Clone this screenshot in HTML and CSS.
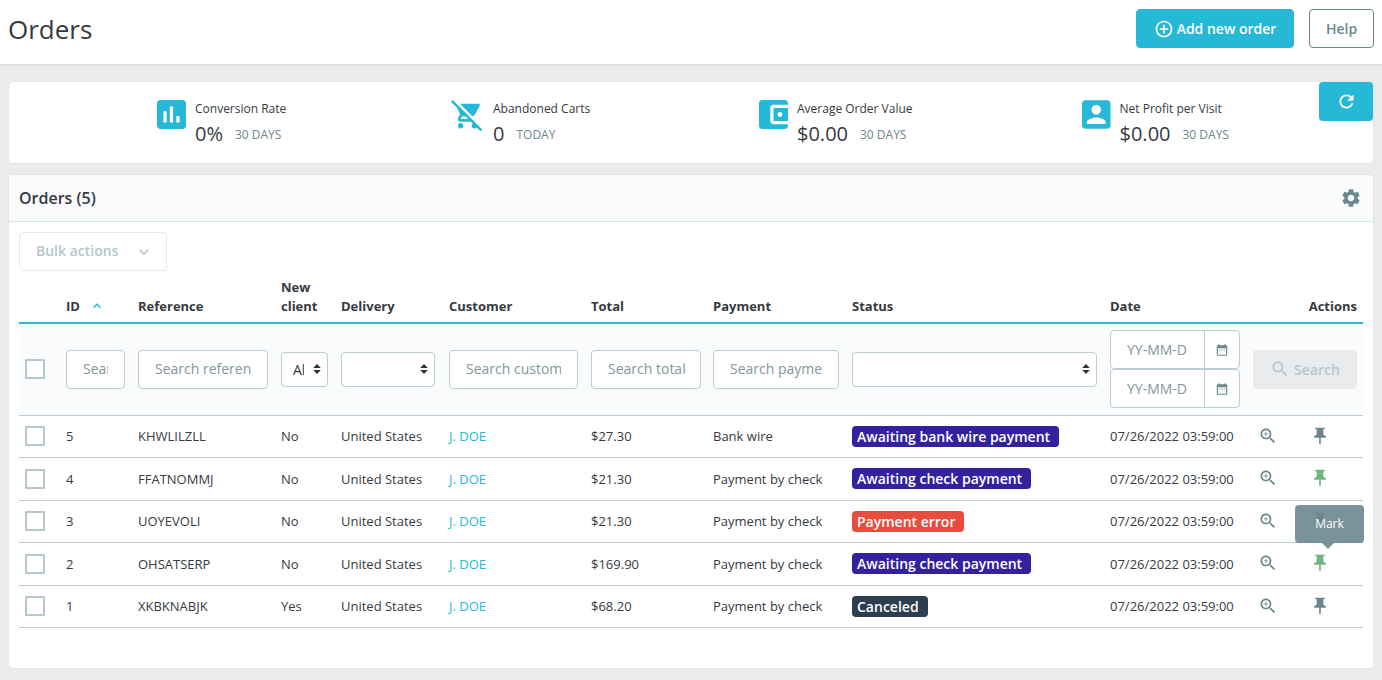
FILE: index.html
```html
<!DOCTYPE html>
<html lang="en">
<head>
<meta charset="utf-8">
<title>Orders</title>
<link rel="stylesheet" href="styles.css">
</head>
<body>
<svg class="defs" width="0" height="0" aria-hidden="true">
  <symbol id="i-zoom" viewBox="0 0 24 24"><path d="M15.5 14h-.79l-.28-.27C15.41 12.59 16 11.11 16 9.5 16 5.91 13.09 3 9.5 3S3 5.91 3 9.5 5.91 16 9.5 16c1.61 0 3.09-.59 4.23-1.57l.27.28v.79l5 4.99L20.49 19l-4.99-5zm-6 0C7.01 14 5 11.99 5 9.5S7.01 5 9.5 5 14 7.01 14 9.5 11.99 14 9.5 14z"/><path d="M12 10h-2v2H9v-2H7V9h2V7h1v2h2v1z"/></symbol>
  <symbol id="i-pin" viewBox="0 0 24 24"><path d="M16 9V4h1c.55 0 1-.45 1-1s-.45-1-1-1H7c-.55 0-1 .45-1 1s.45 1 1 1h1v5c0 1.66-1.34 3-3 3v2h5.97v7l1 1 1-1v-7H19v-2c-1.66 0-3-1.34-3-3z"/></symbol>
  <symbol id="i-carets" viewBox="0 0 8 10"><path d="M4 0l3.8 4H.2zM4 10L.2 6h7.6z"/></symbol>
  <symbol id="i-cal" viewBox="0 0 24 24"><path d="M9 11H7v2h2v-2zm4 0h-2v2h2v-2zm4 0h-2v2h2v-2zm2-7h-1V2h-2v2H8V2H6v2H5c-1.11 0-1.99.9-1.99 2L3 20c0 1.1.89 2 2 2h14c1.1 0 2-.9 2-2V6c0-1.1-.9-2-2-2zm0 16H5V9h14v11z"/></symbol>
</svg>

<header class="page-head">
  <h1 class="page-title">Orders</h1>
  <div class="head-actions">
    <a class="btn btn-primary" href="#"><svg class="btn-icon" viewBox="0 0 24 24"><path d="M13 7h-2v4H7v2h4v4h2v-4h4v-2h-4V7zm-1-5C6.48 2 2 6.48 2 12s4.48 10 10 10 10-4.48 10-10S17.52 2 12 2zm0 18c-4.41 0-8-3.59-8-8s3.59-8 8-8 8 3.59 8 8-3.59 8-8 8z"/></svg>Add new order</a>
    <a class="btn btn-outline" href="#">Help</a>
  </div>
</header>

<main class="content">
  <section class="card kpis">
    <div class="kpi">
      <svg class="kpi-icon" viewBox="3 3 18 18"><path d="M19 3H5c-1.1 0-2 .9-2 2v14c0 1.1.9 2 2 2h14c1.1 0 2-.9 2-2V5c0-1.1-.9-2-2-2zM9 17H7v-7h2v7zm4 0h-2V7h2v10zm4 0h-2v-4h2v4z"/></svg>
      <div class="kpi-text"><div class="kpi-title">Conversion Rate</div><div class="kpi-line"><span class="kpi-value">0%</span><span class="kpi-sub">30 DAYS</span></div></div>
    </div>
    <div class="kpi">
      <svg class="kpi-icon kpi-cart" viewBox="0 1 24 23"><path d="M22.73 22.73L2.77 2.77 2 2l-.73-.73L0 2.54l4.39 4.39 2.21 4.66-1.35 2.45c-.16.28-.25.61-.25.96 0 1.1.9 2 2 2h7.46l1.38 1.38c-.5.36-.83.95-.83 1.62 0 1.1.89 2 1.99 2 .67 0 1.26-.33 1.62-.84L21.46 24l1.27-1.27zM7.42 15c-.14 0-.25-.11-.25-.25l.03-.12.9-1.63h2.36l2 2H7.42zm8.13-2c.75 0 1.41-.41 1.75-1.03l3.58-6.49c.08-.14.12-.31.12-.48 0-.55-.45-1-1-1H6.54l9.01 9zM7 18c-1.1 0-1.99.9-1.99 2S5.9 22 7 22s2-.9 2-2-.9-2-2-2z"/></svg>
      <div class="kpi-text"><div class="kpi-title">Abandoned Carts</div><div class="kpi-line"><span class="kpi-value">0</span><span class="kpi-sub">TODAY</span></div></div>
    </div>
    <div class="kpi">
      <svg class="kpi-icon" viewBox="3 3 18 18"><path d="M21 18v1c0 1.1-.9 2-2 2H5c-1.11 0-2-.9-2-2V5c0-1.1.89-2 2-2h14c1.1 0 2 .9 2 2v1h-9c-1.11 0-2 .9-2 2v8c0 1.1.89 2 2 2h9zm-9-2h10V8H12v8zm4-2.5c-.83 0-1.5-.67-1.5-1.5s.67-1.5 1.5-1.5 1.5.67 1.5 1.5-.67 1.5-1.5 1.5z"/></svg>
      <div class="kpi-text"><div class="kpi-title">Average Order Value</div><div class="kpi-line"><span class="kpi-value">$0.00</span><span class="kpi-sub">30 DAYS</span></div></div>
    </div>
    <div class="kpi">
      <svg class="kpi-icon kpi-box" viewBox="3 3 18 18"><path d="M3 5v14c0 1.1.89 2 2 2h14c1.1 0 2-.9 2-2V5c0-1.1-.9-2-2-2H5c-1.11 0-2 .9-2 2zm12 4c0 1.66-1.34 3-3 3s-3-1.34-3-3 1.34-3 3-3 3 1.34 3 3zm-9 8c0-2 4-3.1 6-3.1s6 1.1 6 3.1v1H6v-1z"/></svg>
      <div class="kpi-text"><div class="kpi-title">Net Profit per Visit</div><div class="kpi-line"><span class="kpi-value">$0.00</span><span class="kpi-sub">30 DAYS</span></div></div>
    </div>
    <a class="refresh" href="#"><svg viewBox="0 0 24 24"><path d="M17.65 6.35C16.2 4.9 14.21 4 12 4c-4.42 0-7.99 3.58-7.99 8s3.57 8 7.99 8c3.73 0 6.84-2.55 7.73-6h-2.08c-.82 2.33-3.04 4-5.65 4-3.31 0-6-2.69-6-6s2.69-6 6-6c1.66 0 3.14.69 4.22 1.78L13 11h7V4l-2.35 2.35z"/></svg></a>
  </section>

  <section class="card orders">
    <div class="orders-head">
      <h2 class="orders-title">Orders (5)</h2>
      <svg class="gear" viewBox="0 0 24 24"><path d="M19.14 12.94c.04-.3.06-.61.06-.94 0-.32-.02-.64-.07-.94l2.03-1.58c.18-.14.23-.41.12-.61l-1.92-3.32c-.12-.22-.37-.29-.59-.22l-2.39.96c-.5-.38-1.03-.7-1.62-.94l-.36-2.54c-.04-.24-.24-.41-.48-.41h-3.84c-.24 0-.43.17-.47.41l-.36 2.54c-.59.24-1.13.57-1.62.94l-2.39-.96c-.22-.08-.47 0-.59.22L2.74 8.87c-.12.21-.08.47.12.61l2.03 1.58c-.05.3-.09.63-.09.94s.02.64.07.94l-2.03 1.58c-.18.14-.23.41-.12.61l1.92 3.32c.12.22.37.29.59.22l2.39-.96c.5.38 1.03.7 1.62.94l.36 2.54c.05.24.24.41.48.41h3.84c.24 0 .44-.17.47-.41l.36-2.54c.59-.24 1.13-.56 1.62-.94l2.39.96c.22.08.47 0 .59-.22l1.92-3.32c.12-.22.07-.47-.12-.61l-2.01-1.58zM12 15.6c-1.98 0-3.6-1.62-3.6-3.6s1.62-3.6 3.6-3.6 3.6 1.62 3.6 3.6-1.62 3.6-3.6 3.6z"/></svg>
    </div>
    <div class="orders-body">
      <button class="bulk" type="button" disabled><span class="bulk-label">Bulk actions</span><svg viewBox="0 0 24 24"><path d="M7.41 8.59L12 13.17l4.59-4.58L18 10l-6 6-6-6 1.41-1.41z"/></svg></button>
      <table class="grid">
        <colgroup>
          <col class="c-check"><col class="c-id"><col class="c-ref"><col class="c-new"><col class="c-del"><col class="c-cust"><col class="c-total"><col class="c-pay"><col class="c-status"><col class="c-date"><col class="c-view"><col class="c-act">
        </colgroup>
        <thead>
          <tr class="titles">
            <th></th>
            <th>ID<svg class="sort" viewBox="0 0 24 24"><path d="M7.41 15.41L12 10.83l4.59 4.58L18 14l-6-6-6 6z"/></svg></th>
            <th>Reference</th>
            <th>New<br>client</th>
            <th>Delivery</th>
            <th>Customer</th>
            <th>Total</th>
            <th>Payment</th>
            <th>Status</th>
            <th>Date</th>
            <th></th>
            <th class="right">Actions</th>
          </tr>
          <tr class="filters">
            <td><span class="check"></span></td>
            <td><input class="field" placeholder="Search ID"></td>
            <td><input class="field" placeholder="Search reference"></td>
            <td><div class="sel sel-all"><select><option>All</option></select><svg><use href="#i-carets"/></svg></div></td>
            <td class="f-delivery"><div class="sel"><select><option></option></select><svg><use href="#i-carets"/></svg></div></td>
            <td><input class="field" placeholder="Search customer"></td>
            <td class="f-total"><input class="field" placeholder="Search total"></td>
            <td><input class="field" placeholder="Search payment"></td>
            <td><div class="sel"><select><option></option></select><svg><use href="#i-carets"/></svg></div></td>
            <td>
              <div class="dates">
                <div class="date"><input placeholder="YY-MM-DD"><span class="addon"><svg><use href="#i-cal"/></svg></span></div>
                <div class="date"><input placeholder="YY-MM-DD"><span class="addon"><svg><use href="#i-cal"/></svg></span></div>
              </div>
            </td>
            <td colspan="2" class="right f-search"><button class="search" type="button" disabled><svg viewBox="0 0 24 24"><path d="M15.5 14h-.79l-.28-.27C15.41 12.59 16 11.11 16 9.5 16 5.91 13.09 3 9.5 3S3 5.91 3 9.5 5.91 16 9.5 16c1.61 0 3.09-.59 4.23-1.57l.27.28v.79l5 4.99L20.49 19l-4.99-5zm-6 0C7.01 14 5 11.99 5 9.5S7.01 5 9.5 5 14 7.01 14 9.5 11.99 14 9.5 14z"/></svg>Search</button></td>
          </tr>
        </thead>
        <tbody>
          <tr>
            <td><span class="check"></span></td><td>5</td><td>KHWLILZLL</td><td>No</td><td>United States</td><td><a class="link" href="#">J. DOE</a></td><td>$27.30</td><td>Bank wire</td>
            <td><span class="badge b-blue">Awaiting bank wire payment</span></td><td>07/26/2022 03:59:00</td>
            <td><svg class="ic-zoom"><use href="#i-zoom"/></svg></td><td><svg class="ic-pin"><use href="#i-pin"/></svg></td>
          </tr>
          <tr>
            <td><span class="check"></span></td><td>4</td><td>FFATNOMMJ</td><td>No</td><td>United States</td><td><a class="link" href="#">J. DOE</a></td><td>$21.30</td><td>Payment by check</td>
            <td><span class="badge b-blue">Awaiting check payment</span></td><td>07/26/2022 03:59:00</td>
            <td><svg class="ic-zoom"><use href="#i-zoom"/></svg></td><td><svg class="ic-pin on"><use href="#i-pin"/></svg></td>
          </tr>
          <tr>
            <td><span class="check"></span></td><td>3</td><td>UOYEVOLI</td><td>No</td><td>United States</td><td><a class="link" href="#">J. DOE</a></td><td>$21.30</td><td>Payment by check</td>
            <td><span class="badge b-red">Payment error</span></td><td>07/26/2022 03:59:00</td>
            <td><svg class="ic-zoom"><use href="#i-zoom"/></svg></td><td><span class="pin-wrap"><svg class="ic-pin"><use href="#i-pin"/></svg><span class="tip">Mark</span></span></td>
          </tr>
          <tr>
            <td><span class="check"></span></td><td>2</td><td>OHSATSERP</td><td>No</td><td>United States</td><td><a class="link" href="#">J. DOE</a></td><td>$169.90</td><td>Payment by check</td>
            <td><span class="badge b-blue">Awaiting check payment</span></td><td>07/26/2022 03:59:00</td>
            <td><svg class="ic-zoom"><use href="#i-zoom"/></svg></td><td><svg class="ic-pin on"><use href="#i-pin"/></svg></td>
          </tr>
          <tr>
            <td><span class="check"></span></td><td>1</td><td>XKBKNABJK</td><td>Yes</td><td>United States</td><td><a class="link" href="#">J. DOE</a></td><td>$68.20</td><td>Payment by check</td>
            <td><span class="badge b-dark">Canceled</span></td><td>07/26/2022 03:59:00</td>
            <td><svg class="ic-zoom"><use href="#i-zoom"/></svg></td><td><svg class="ic-pin"><use href="#i-pin"/></svg></td>
          </tr>
        </tbody>
      </table>
    </div>
  </section>
</main>
</body>
</html>
```
FILE: styles.css
```css
* { box-sizing: border-box; }
html, body { margin: 0; padding: 0; }
body {
  background: #eaebec;
  color: #363a41;
  font-family: "Open Sans", "Liberation Sans", sans-serif;
  font-size: 13px;
  overflow: hidden;
  height: 680px;
}
a { text-decoration: none; }
.defs { position: absolute; }

.page-head {
  height: 66px;
  background: #fff;
  border-bottom: 2px solid #dfe1e3;
  display: flex;
  justify-content: space-between;
  align-items: flex-start;
  padding: 9px 8px 0 8px;
}
.page-title { margin: 0; font-size: 26px; font-weight: 400; line-height: 40px; }
.head-actions { display: flex; gap: 15px; }
.btn {
  height: 39px;
  display: flex;
  align-items: center;
  justify-content: center;
  border-radius: 4px;
  font-size: 14px;
  font-weight: 600;
}
.btn-primary { width: 158px; background: #25b9d7; color: #fff; border: 1px solid #25b9d7; }
.btn-icon { width: 20px; height: 20px; fill: #fff; margin-right: 3px; }
.btn-outline { width: 65px; background: #fff; color: #6c868e; border: 1px solid #6c868e; }

.content { padding: 16px 9px 0; }
.card {
  background: #fff;
  border-radius: 4px;
  box-shadow: 0 0 2px rgba(0, 0, 0, .08);
}
.kpis {
  position: relative;
  height: 81px;
  display: grid;
  grid-template-columns: 294px 308px 323px 1fr;
  padding: 18px 0 0 148px;
}
.kpi { display: flex; align-items: flex-start; }
.kpi-icon { width: 29px; height: 29px; fill: #25b9d7; flex: none; margin-right: 9px; }
.kpi-cart { width: 33px; height: 33px; margin: -1px 9px 0 0; }
.kpi-box { width: 28.5px; }
.kpi-title { font-size: 12px; line-height: 18px; }
.kpi-line { display: flex; align-items: center; }
.kpi-value { font-size: 20px; line-height: 32px; }
.kpi-sub { font-size: 12px; color: #6c868e; margin-left: 12px; }
.refresh {
  position: absolute;
  top: 0;
  right: 0;
  width: 54px;
  height: 39px;
  background: #25b9d7;
  border-radius: 4px;
  display: flex;
  align-items: center;
  justify-content: center;
}
.refresh svg { width: 21px; height: 21px; fill: #fff; }

.orders { margin-top: 12px; height: 493px; }
.orders-head {
  height: 47px;
  background: #fafbfc;
  border-bottom: 1px solid #dbe6e9;
  border-radius: 4px 4px 0 0;
  display: flex;
  justify-content: space-between;
  align-items: center;
  padding: 0 11px 0 10px;
}
.orders-title { margin: 0; font-size: 16px; font-weight: 600; }
.gear { width: 22px; height: 22px; fill: #6c868e; }
.orders-body { padding: 10px 10px 0; }

.bulk {
  width: 148px;
  height: 39px;
  background: #fff;
  border: 1px solid #e4e9ea;
  border-radius: 4px;
  padding: 0 12px 0 16px;
  display: flex;
  align-items: center;
  justify-content: space-between;
  color: #b3c7cd;
  font: 600 14px "Open Sans", sans-serif;
}
.bulk-label { margin-bottom: 2px; }
.bulk svg { width: 20px; height: 20px; fill: #b3c7cd; }

.grid { width: 1344px; table-layout: fixed; border-collapse: collapse; }
.c-check { width: 41px; }
.c-id { width: 72px; }
.c-ref { width: 143px; }
.c-new { width: 60px; }
.c-del { width: 108px; }
.c-cust { width: 142px; }
.c-total { width: 122px; }
.c-pay { width: 139px; }
.c-status { width: 258px; }
.c-date { width: 142px; }
.c-view { width: 40px; }
.c-act { width: 77px; }

.grid th, .grid td { padding: 0 6px; text-align: left; }
.grid .right { text-align: right; }
.titles th {
  font-weight: 700;
  font-size: 13px;
  line-height: 19px;
  vertical-align: bottom;
  padding-top: 7px;
  padding-bottom: 6px;
  border-bottom: 2px solid #25b9d7;
  white-space: nowrap;
}
.sort { width: 16px; height: 16px; fill: #25b9d7; margin-left: 9px; vertical-align: -3px; }
.grid .filters td {
  height: 92px;
  background: #fafbfc;
  border-bottom: 1px solid #bbcdd2;
  vertical-align: middle;
  padding-right: 7px;
}
.grid .filters .f-total, .grid .filters .f-search { padding-right: 6px; }
.grid .filters .f-delivery { padding-right: 8px; }
.check {
  display: block;
  width: 20px;
  height: 20px;
  background: #fff;
  border: 2px solid #b3c7cd;
  border-radius: 1px;
}
.field {
  display: block;
  width: 100%;
  height: 39px;
  border: 1px solid #bbcdd2;
  border-radius: 4px;
  padding: 0 16px 2px;
  background: #fff;
  font: 14px "Open Sans", sans-serif;
  color: #363a41;
}
.f-total .field { padding-right: 12px; }
.field::placeholder, .date input::placeholder { color: #6c868e; opacity: .85; }
.sel { position: relative; }
.sel select {
  appearance: none;
  display: block;
  width: 100%;
  height: 35px;
  border: 1px solid #bbcdd2;
  border-radius: 4px;
  background: #fff;
  padding: 0 20px 0 8px;
  font: 14px "Open Sans", sans-serif;
  color: #363a41;
}
.sel svg {
  position: absolute;
  right: 7px;
  top: 12px;
  width: 8px;
  height: 10px;
  fill: #2c3338;
}
.sel-all select { padding: 0 23px 0 11px; }
.dates { display: flex; flex-direction: column; width: 130px; }
.date {
  display: flex;
  height: 39px;
  border: 1px solid #bbcdd2;
  border-radius: 4px;
  background: #fff;
  overflow: hidden;
}
.date input {
  width: 93px;
  border: 0;
  padding: 0 16px;
  background: transparent;
  font: 14px "Open Sans", sans-serif;
  min-width: 0;
}
.addon {
  flex: 1;
  border-left: 1px solid #bbcdd2;
  display: flex;
  align-items: center;
  justify-content: center;
}
.addon svg { width: 14px; height: 14px; fill: #6c868e; }
.search {
  width: 104px;
  height: 39px;
  margin-left: auto;
  background: #eaebec;
  border: 0;
  border-radius: 4px;
  color: #b3c7cd;
  font: 600 14px "Open Sans", sans-serif;
  display: flex;
  align-items: center;
  justify-content: center;
}
.search svg { width: 20px; height: 20px; fill: #b3c7cd; margin-right: 4px; }

tbody td {
  height: 42.5px;
  font-size: 13px;
  border-bottom: 1px solid #bbcdd2;
  white-space: nowrap;
  vertical-align: middle;
}
.link { color: #25b9d7; }
.badge {
  display: inline-block;
  height: 21px;
  line-height: 21px;
  padding: 0 9px 0 5px;
  border-radius: 4px;
  color: #fff;
  font-size: 14px;
  font-weight: 600;
}
.b-blue { background: #34219e; }
.b-red { background: #e74c3c; }
.b-dark { background: #2c3e50; }
.ic-zoom { display: block; width: 20px; height: 20px; fill: #6c868e; margin: -1px 0 0 6px; }
.ic-pin { display: block; width: 20px; height: 20px; fill: #6c868e; margin: -1px 0 0 17.5px; }
.ic-pin.on { fill: #70b580; }
.pin-wrap { display: block; position: relative; }
.tip {
  position: absolute;
  left: 3px;
  top: -6px;
  width: 69px;
  height: 38px;
  background: rgba(108, 134, 142, .9);
  color: #fff;
  font-size: 12px;
  border-radius: 4px;
  display: flex;
  align-items: center;
  justify-content: center;
}
.tip::after {
  content: "";
  position: absolute;
  left: 27px;
  bottom: -6px;
  border: 6px solid transparent;
  border-bottom: 0;
  border-top-color: rgba(108, 134, 142, .9);
}
```
